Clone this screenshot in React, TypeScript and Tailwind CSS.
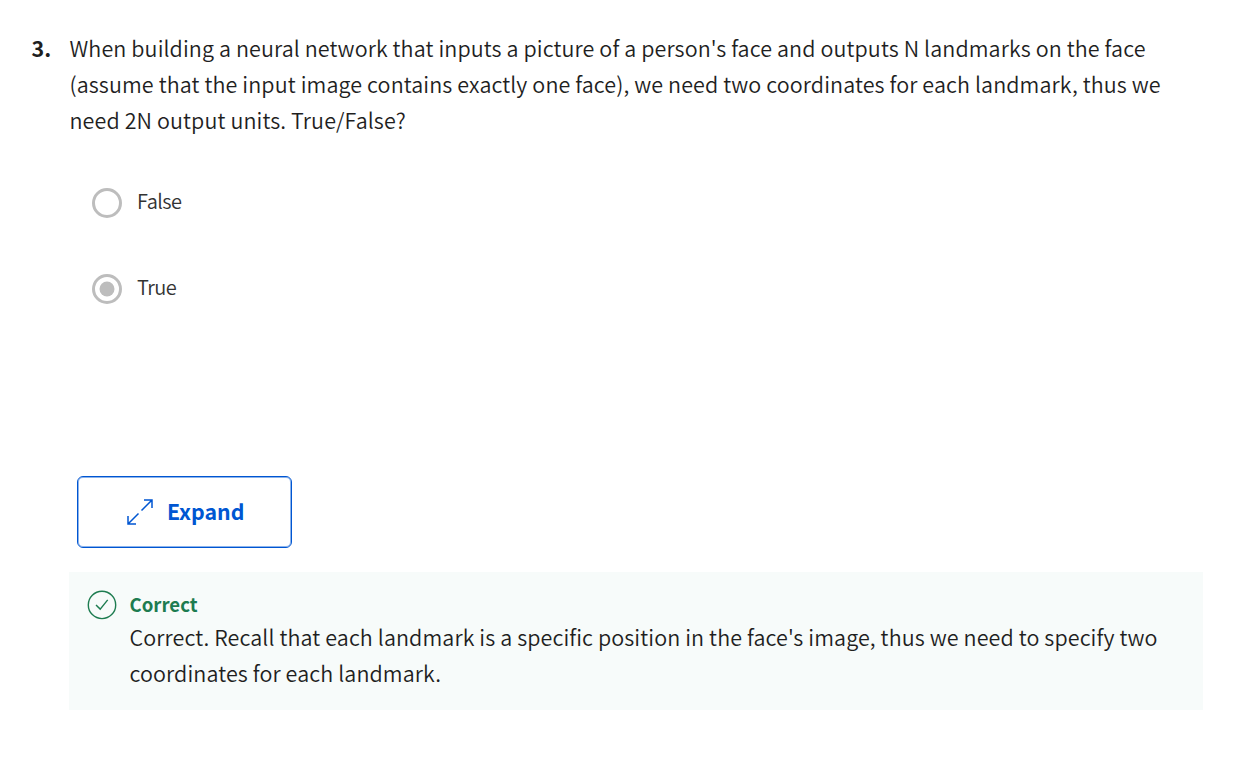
export default function App() {
  return (
    <main className="flex min-h-screen flex-col bg-white pt-[30px] font-['Noto_Sans_CJK_SC',sans-serif] text-[#1f1f1f]">
      <section className="ml-[31.5px] flex">
        <span className="w-[38px] shrink-0 text-[21.5px] leading-9 font-bold">3.</span>
        <div className="text-[21.5px] leading-9 font-[350] tracking-[0.1px] whitespace-nowrap">
          <p>When building a neural network that inputs a picture of a person's face and outputs N landmarks on the face</p>
          <p>(assume that the input image contains exactly one face), we need two coordinates for each landmark, thus we</p>
          <p>need 2N output units. True/False?</p>
        </div>
      </section>
      <div role="radiogroup" className="mt-[50px] ml-[92px] flex flex-col gap-14 text-[20px] leading-[26px] font-[350] tracking-[-0.55px] text-[#333]">
        <div role="radio" aria-checked="false" className="flex h-[30px] items-start gap-[15px]">
          <span className="size-[30px] rounded-full border-3 border-[#bdbdbd]" />
          <span>False</span>
        </div>
        <div role="radio" aria-checked="true" className="flex h-[30px] items-start gap-[15px]">
          <span className="flex size-[30px] items-center justify-center rounded-full border-3 border-[#bdbdbd]">
            <svg className="size-4 text-[#bdbdbd]" viewBox="0 0 16 16" fill="currentColor">
              <circle cx="8" cy="8" r="7.5" />
            </svg>
          </span>
          <span>True</span>
        </div>
      </div>
      <button className="mt-[172px] ml-[77px] flex h-[72px] w-[215px] items-center rounded-[6px] border border-[#0056d2] pl-[48px] text-[21.3px] font-bold text-[#0056d2] shadow-[inset_0_0_0_1px_rgba(0,86,210,0.45)]">
        <svg className="mr-[13px] size-[28px]" viewBox="0 0 28 28" fill="none" stroke="currentColor" strokeWidth="1.5">
          <path d="M18 2h8v8M26 2 15.5 12.5M2 18v8h8M2 26l10.5-10.5" />
        </svg>
        <span className="mb-[2.5px]">Expand</span>
      </button>
      <section className="mt-6 ml-[69px] flex h-[138px] w-[1134px] bg-[#f7fbfa] pt-[17px] pl-[18px]">
        <svg className="mt-px mr-[12.5px] size-[30px] shrink-0 text-[#1d7c50]" viewBox="0 0 30 30" fill="none" stroke="currentColor" strokeWidth="1.4">
          <circle cx="15" cy="14.9" r="13.7" />
          <path d="m9 14.9 4.2 4.2 7.5-9.2" />
        </svg>
        <div className="whitespace-nowrap">
          <h2 className="text-[18.6px] leading-[30px] font-bold text-[#1d7c50]">Correct</h2>
          <div className="text-[21.5px] leading-9 font-[350] tracking-[0.1px]">
            <p>Correct. Recall that each landmark is a specific position in the face's image, thus we need to specify two</p>
            <p>coordinates for each landmark.</p>
          </div>
        </div>
      </section>
    </main>
  );
}
